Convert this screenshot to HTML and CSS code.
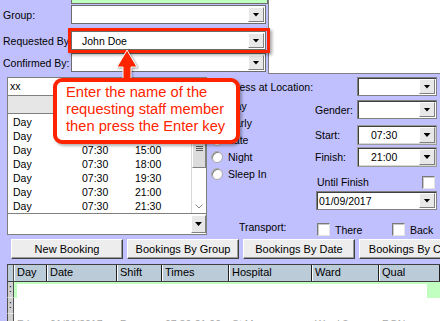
FILE: index.html
```html
<!DOCTYPE html>
<html>
<head>
	<meta charset="UTF-8">
	<meta name="viewport" content="width=device-width, initial-scale=1">
	<title>Bookings</title>
	<link rel="stylesheet" href="styles.css">
</head>
<body>
<div class="screen">
	<div class="top">
		<div class="top-form">
			<div class="green-field"></div>
			<div class="form-row row-group">
				<label>Group:</label>
				<div class="combo"><span class="combo-text"></span><span class="drop"></span></div>
			</div>
			<div class="form-row row-req">
				<label>Requested By</label>
				<div class="combo"><span class="combo-text">John Doe</span><span class="drop"></span></div>
			</div>
			<div class="form-row row-conf">
				<label>Confirmed By:</label>
				<div class="combo"><span class="combo-text"></span><span class="drop"></span></div>
			</div>
		</div>
		<div class="top-blank"></div>
	</div>

	<div class="mid">
		<div class="list-panel">
			<div class="search">xx</div>
			<div class="list-head"></div>
			<div class="list-body">
				<div class="rows">
					<div class="row"><span>Day</span><span>07:30</span><span>15:00</span></div>
					<div class="row"><span>Day</span><span>07:30</span><span>15:00</span></div>
					<div class="row"><span>Day</span><span>07:30</span><span>15:00</span></div>
					<div class="row"><span>Day</span><span>07:30</span><span>18:00</span></div>
					<div class="row"><span>Day</span><span>07:30</span><span>19:30</span></div>
					<div class="row"><span>Day</span><span>07:30</span><span>21:00</span></div>
					<div class="row"><span>Day</span><span>07:30</span><span>21:30</span></div>
				</div>
				<div class="vscroll">
					<div class="up"></div>
					<div class="thumb"><span class="grip"></span></div>
					<div class="track"></div>
					<div class="down">
						<svg width="8" height="5" viewBox="0 0 8 5"><polyline points="0.5,0.5 4,4 7.5,0.5" fill="none" stroke="#8a8a8a" stroke-width="1"/></svg>
					</div>
				</div>
			</div>
			<div class="combo list-combo"><span class="combo-text"></span><span class="drop"></span></div>
		</div>

		<div class="side">
			<div class="loc-row">
				<label>Access at Location:</label>
				<div class="combo field-combo"><span class="combo-text"></span><span class="drop"></span></div>
			</div>
			<div class="side-cols">
				<div class="radios">
					<div class="radio"><span class="dot"></span>Day</div>
					<div class="radio"><span class="dot"></span>Early</div>
					<div class="radio"><span class="dot"></span>Late</div>
					<div class="radio"><span class="dot"></span>Night</div>
					<div class="radio"><span class="dot"></span>Sleep In</div>
					<div class="transport">Transport:</div>
				</div>
				<div class="fields">
					<div class="field f-gender">
						<label>Gender:</label>
						<div class="combo field-combo"><span class="combo-text"></span><span class="drop"></span></div>
					</div>
					<div class="field f-start">
						<label>Start:</label>
						<div class="combo field-combo time"><span class="combo-text">07:30</span><span class="drop"></span></div>
					</div>
					<div class="field f-finish">
						<label>Finish:</label>
						<div class="combo field-combo time"><span class="combo-text">21:00</span><span class="drop"></span></div>
					</div>
					<div class="field f-until">
						<span>Until Finish</span>
						<span class="check"></span>
					</div>
					<div class="combo date-combo"><span class="combo-text">01/09/2017</span><span class="drop"></span></div>
					<div class="field f-transport">
						<span class="opt opt-there"><span class="check"></span>There</span>
						<span class="opt"><span class="check"></span>Back</span>
					</div>
				</div>
			</div>
		</div>
	</div>

	<div class="buttons">
		<div class="btn">New Booking</div>
		<div class="btn">Bookings By Group</div>
		<div class="btn">Bookings By Date</div>
		<div class="btn">Bookings By Client</div>
	</div>

	<div class="grid">
		<div class="ghead">
			<div class="ind"></div>
			<div class="hc c-day">Day</div>
			<div class="hc c-date">Date</div>
			<div class="hc c-shift">Shift</div>
			<div class="hc c-times">Times</div>
			<div class="hc c-hosp">Hospital</div>
			<div class="hc c-ward">Ward</div>
			<div class="hc c-qual">Qual</div>
		</div>
		<div class="grow sel">
			<div class="ind">:</div>
			<div class="gbody"><div class="gbody-inner"></div></div>
		</div>
		<div class="grow">
			<div class="ind">:</div>
			<div class="gbody"></div>
		</div>
		<div class="grow faint">
			<div class="ind"></div>
			<div class="gbody">
				<span class="c-day">Fri</span><span class="c-date">01/09/2017</span><span class="c-shift">Day</span><span class="c-times">07:30-21:00</span><span class="c-hosp">St Marys</span><span class="c-ward">Ward 3</span><span class="c-qual">RGN</span>
			</div>
		</div>
	</div>

	<!-- tutorial overlay -->
	<div class="highlight"></div>
	<svg class="arrow" width="32" height="36" viewBox="0 0 32 36">
		<polygon points="16,4 26,21 20,21 20,35 12,35 12,21 6,21" fill="#ff2400" stroke="#fff" stroke-width="1"/>
	</svg>
	<div class="callout">Enter the name of the<br>requesting staff member<br>then press the Enter key</div>
</div>
</body>
</html>
```

FILE: styles.css
```css
* {
	box-sizing: border-box;
}
body {
	margin: 0;
	background: #c0c0ff;
	font-family: "Liberation Sans", Arial, sans-serif;
	font-size: 10.5px;
	color: #000;
}
.screen {
	position: relative;
	width: 440px;
	height: 321px;
	overflow: hidden;
}

/* top form */
.top {
	display: flex;
	height: 74px;
}
.top-form {
	width: 268px;
}
.top-blank {
	flex: 1;
	background: #fff;
	border-left: 1px solid #7f7f7f;
	border-bottom: 1px solid #7f7f7f;
}
.green-field {
	margin-left: 71px;
	width: 197px;
	height: 4px;
	background: #c0ffc0;
	border: 1px solid #6e6e6e;
	border-top: 0;
}
.form-row {
	display: flex;
	align-items: center;
	height: 19px;
}
.row-group { margin-top: 1px; }
.row-req { margin-top: 7px; }
.row-conf { margin-top: 3px; }
.form-row label {
	width: 71px;
	padding-left: 3px;
	white-space: nowrap;
}
.combo {
	display: flex;
	align-items: center;
	height: 19px;
	background: #fff;
	border: 1px solid #6c6c6c;
}
.top .combo {
	width: 195px;
}
.combo-text {
	flex: 1;
	padding-left: 10px;
	white-space: nowrap;
}
.drop {
	width: 16px;
	align-self: stretch;
	margin: 1px;
	background: #e8e8e8;
	border-top: 1px solid #fff;
	border-left: 1px solid #fff;
	border-right: 1px solid #808080;
	border-bottom: 1px solid #808080;
	display: flex;
	align-items: center;
	justify-content: center;
}
.drop::after {
	content: "";
	width: 7px;
	height: 4px;
	background: #000;
	clip-path: polygon(0 0, 100% 0, 50% 100%);
}

/* middle section */
.mid {
	display: flex;
	height: 163px;
}
.list-panel {
	margin: 3px 0 0 7px;
	width: 200px;
	height: 158px;
	border: 1px solid #7f7f7f;
	background: #fff;
	display: flex;
	flex-direction: column;
}
.search {
	height: 18px;
	line-height: 17px;
	padding-left: 2px;
	border-bottom: 1px solid #808080;
}
.list-head {
	height: 18px;
	background: #e6e6e6;
	border-bottom: 1px solid #808080;
}
.list-body {
	height: 100px;
	display: flex;
	border-bottom: 1px solid #808080;
	overflow: hidden;
}
.rows {
	flex: 1;
	padding: 1px 0 0 5px;
}
.row {
	display: grid;
	grid-template-columns: 69px 53px 1fr;
	height: 14px;
	line-height: 14px;
}
.vscroll {
	width: 15px;
	display: flex;
	flex-direction: column;
	border-left: 1px solid #d8d8d8;
}
.up {
	height: 14px;
}
.thumb {
	height: 40px;
	background: #dcdcdc;
	border: 1px solid;
	border-color: #fff #808080 #808080 #fff;
	display: flex;
	align-items: center;
	justify-content: center;
}
.grip {
	width: 7px;
	height: 5px;
	background: repeating-linear-gradient(#5a5a5a 0 1px, transparent 1px 2px);
}
.track {
	flex: 1;
}
.down {
	height: 14px;
	display: flex;
	align-items: center;
	justify-content: center;
}
.list-panel .list-combo {
	height: 20px;
	border: 0;
}
.list-combo .drop {
	width: 15px;
	margin: 1px 0 1px 0;
}

.side {
	flex: 1;
	display: flex;
	flex-direction: column;
}
.loc-row {
	display: flex;
	align-items: center;
	margin-top: 3px;
	height: 19px;
}
.loc-row label {
	margin-left: 15px;
	white-space: nowrap;
}
.field-combo {
	width: 80px;
	border-color: #808080;
	box-shadow: inset 1px 1px #404040;
}
.loc-row .field-combo {
	margin-left: auto;
	margin-right: 3px;
}
.side-cols {
	display: flex;
	flex: 1;
}
.radios {
	width: 108px;
	padding: 1px 0 0 4px;
	display: flex;
	flex-direction: column;
}
.radio {
	display: flex;
	align-items: center;
	height: 17px;
}
.dot {
	width: 12px;
	height: 12px;
	border-radius: 50%;
	background: #fff;
	border: 1px solid #a8a8a8;
	box-shadow: inset 1px 1px #808080;
	margin-right: 5px;
}
.transport {
	margin-top: 38px;
	padding-left: 28px;
	line-height: 14px;
}
.fields {
	flex: 1;
	display: flex;
	flex-direction: column;
}
.field {
	display: flex;
	align-items: center;
}
.field label {
	width: 42px;
}
.f-gender { margin-top: 4px; }
.f-start { margin-top: 6px; }
.f-finish { margin-top: 2px; }
.time {
	height: 20px;
	border: 1px solid #9a9a9a;
	box-shadow: inset 1px 1px #404040, inset -1px -1px #d8d8d8;
}
.time .combo-text {
	padding-left: 13px;
}
.f-until {
	margin-top: 8px;
	height: 14px;
	padding-left: 2px;
}
.f-until .check {
	margin-left: auto;
	margin-right: 5px;
}
.check {
	display: inline-block;
	width: 13px;
	height: 13px;
	background: #fff;
	border: 1px solid;
	border-color: #7a7a7a #e4e4e4 #e4e4e4 #7a7a7a;
	box-shadow: inset 1px 1px #c8c8c8;
}
.date-combo {
	margin: 2px 3px 0 1px;
	border-color: #808080;
	box-shadow: inset 1px 1px #404040;
}
.date-combo .combo-text {
	padding-left: 2px;
}
.f-transport {
	margin-top: 13px;
	padding-left: 2px;
}
.opt {
	display: flex;
	align-items: center;
}
.opt .check {
	margin-right: 5px;
}
.opt-there {
	width: 75px;
}

/* buttons */
.buttons {
	display: flex;
	gap: 4px;
	padding-left: 11px;
	margin-top: 2px;
	height: 20px;
}
.btn {
	flex: none;
	width: 112px;
	background: #ededed;
	border-top: 1px solid #fff;
	border-left: 1px solid #fff;
	border-right: 1px solid #404040;
	border-bottom: 1px solid #404040;
	box-shadow: inset -1px -1px #9a9a9a;
	display: flex;
	align-items: center;
	justify-content: center;
	font-size: 11px;
	white-space: nowrap;
}

/* bookings grid */
.grid {
	margin: 5px 0 0 7px;
	border-top: 1px solid #404040;
	background: #fff;
}
.ghead {
	display: flex;
	height: 17px;
	background: #bccbd8;
	border-bottom: 1px solid #404040;
	font-size: 11px;
}
.ind {
	flex: none;
	width: 7px;
	background: #cfcfcf;
	border-left: 1px solid #505050;
	border-right: 1px solid #505050;
	font-size: 10px;
	line-height: 14px;
	padding-left: 1px;
}
.ghead .ind {
	background: #bccbd8;
}
.hc {
	border-left: 1px solid #fff;
	border-right: 1px solid #202020;
	padding-left: 2px;
	line-height: 15px;
	white-space: nowrap;
}
.c-day { width: 33px; }
.c-date { width: 70px; }
.c-shift { width: 45px; }
.c-times { width: 67px; }
.c-hosp { width: 83px; }
.c-ward { width: 67px; }
.c-qual { flex: 1; }
.grow {
	display: flex;
	height: 16px;
}
.grow .ind {
	border-bottom: 1px solid #e8e8e8;
}
.gbody {
	flex: 1;
	display: flex;
}
.sel .gbody {
	background: #c0ffc0;
	padding: 2px 13px 0 3px;
}
.gbody-inner {
	flex: 1;
	background: #fff;
}
.faint .gbody {
	color: #a8a8a8;
	line-height: 16px;
	padding-top: 2px;
}
.faint .gbody span {
	padding-left: 3px;
	white-space: nowrap;
}

/* tutorial overlay */
.highlight {
	position: absolute;
	left: 68px;
	top: 28px;
	width: 202px;
	height: 25px;
	border: 3px solid #ff2400;
	box-shadow: 2px 2px 3px rgba(0, 0, 0, 0.35);
}
.arrow {
	position: absolute;
	left: 111px;
	top: 46px;
	filter: drop-shadow(1px 1px 1px rgba(0, 0, 0, 0.4));
}
.callout {
	position: absolute;
	left: 53px;
	top: 78px;
	width: 187px;
	height: 66px;
	border: 4px solid #ff2400;
	border-radius: 9px;
	background: #fff;
	color: #ff2400;
	font-size: 14.7px;
	line-height: 17px;
	padding: 2px 0 0 9px;
	white-space: nowrap;
	box-shadow: 2px 2px 3px rgba(0, 0, 0, 0.3);
}
```
